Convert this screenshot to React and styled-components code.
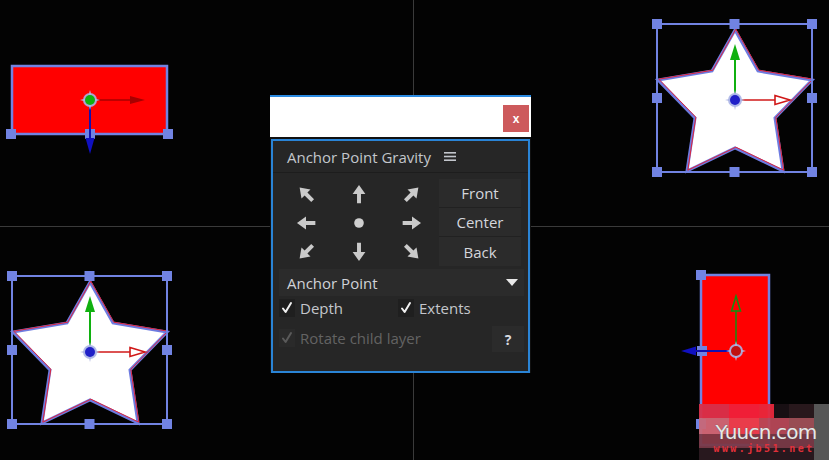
import React from "react";
import styled, { createGlobalStyle } from "styled-components";

const Global = createGlobalStyle`
  html, body { margin: 0; padding: 0; background: #000; }
  body { font-family: "Open Sans", "Noto Sans", sans-serif; }
`;

const Stage = styled.div`
  position: relative;
  width: 829px;
  height: 460px;
  overflow: hidden;
  background: #030303;
`;

const CanvasSvg = styled.svg`
  display: block;
`;

const Window = styled.div`
  position: absolute;
  left: 270px;
  top: 95px;
  width: 261px;
  display: flex;
  flex-direction: column;
  background: #111;
`;

const TitleBar = styled.div`
  height: 37px;
  background: #fff;
  border-top: 2px solid #2b8be2;
  display: flex;
  align-items: center;
  justify-content: flex-end;
  padding: 3px 2px 0 0;
  box-sizing: content-box;
`;

const CloseButton = styled.div`
  width: 26px;
  height: 27px;
  background: #cd5a5c;
  color: #fff;
  font: bold 12px "Liberation Sans", Arial, sans-serif;
  display: flex;
  align-items: center;
  justify-content: center;
`;

const Panel = styled.div`
  margin: 2px 1px 0 1px;
  height: 230px;
  border: 2px solid #2a84d6;
  background: #262626;
  display: flex;
  flex-direction: column;
  color: #c6c6c6;
`;

const Header = styled.div`
  height: 31px;
  border-bottom: 1px solid #1d1d1d;
  display: flex;
  align-items: center;
  gap: 13px;
  padding-left: 14px;
  font-size: 15px;
  color: #c3c6cc;
`;

const Body = styled.div`
  display: flex;
  flex-direction: column;
  padding: 6px 4px 0 6px;
`;

const GravityGrid = styled.div`
  display: grid;
  grid-template-columns: 53px 53px 53px 83px;
  grid-template-rows: repeat(3, 29px);
  & > :nth-child(4n) {
    margin-left: 1px;
  }
`;

const ArrowCell = styled.div`
  display: flex;
  align-items: center;
  justify-content: center;
`;

const SideButton = styled.div`
  background: #2b2b2b;
  border-bottom: ${(p) => (p.$last ? "none" : "1px solid #212121")};
  display: flex;
  align-items: center;
  justify-content: center;
  font-size: 15px;
  color: #d4d6dc;
`;

const Dropdown = styled.div`
  margin-top: 3px;
  height: 27px;
  background: #2b2b2b;
  display: flex;
  align-items: center;
  justify-content: space-between;
  padding: 0 6px 0 8px;
  font-size: 15px;
  color: #d0d2d8;
`;

const CheckRow = styled.div`
  margin-top: 1px;
  height: 22px;
  display: grid;
  grid-template-columns: 119px 1fr;
  align-items: center;
`;

const BottomRow = styled.div`
  margin-top: 7px;
  height: 26px;
  display: flex;
  align-items: center;
  justify-content: space-between;
`;

const Check = styled.label`
  display: flex;
  align-items: center;
  gap: 5px;
  font-size: 15px;
  color: ${(p) => (p.$disabled ? "#636363" : "#c4c6cc")};
  margin-top: ${(p) => (p.$disabled ? "-3px" : "0")};
`;

const Box = styled.span`
  width: 16px;
  height: 18px;
  background: ${(p) => (p.$disabled ? "#2a2a2a" : "#1f1f1f")};
  display: flex;
  align-items: center;
  justify-content: center;
`;

const HelpButton = styled.div`
  width: 32px;
  height: 26px;
  background: #2b2b2b;
  display: flex;
  align-items: center;
  justify-content: center;
  font-size: 14px;
  font-weight: bold;
  color: #d8dae0;
`;

const Watermark = styled.div`
  position: absolute;
  left: 699px;
  top: 404px;
  width: 130px;
  height: 56px;
  display: flex;
  flex-direction: column;
  align-items: center;
`;

const MarkMain = styled.div`
  margin-top: 17px;
  margin-left: 4px;
  font: 20px "DejaVu Sans", sans-serif;
  letter-spacing: -0.8px;
  color: #e8e8e8;
  line-height: 22px;
  text-shadow: 0 0 1px #555;
`;

const MarkSub = styled.div`
  font: bold 10px "DejaVu Sans Mono", monospace;
  letter-spacing: 2.4px;
  color: #e0303a;
  line-height: 12px;
`;

const Arrow = ({ angle }) => (
  <svg width="22" height="22" viewBox="0 0 20 20">
    <g transform={`rotate(${angle} 10 10)`}>
      <path d="M1.5 8.2h8.5V4.2L18.2 10 10 15.8v-4H1.5z" fill="#cacaca" />
    </g>
  </svg>
);

const Dot = () => (
  <svg width="20" height="20" viewBox="0 0 20 20">
    <circle cx="10" cy="10" r="4.8" fill="#cfcfcf" />
  </svg>
);

const Hamburger = () => (
  <svg width="12" height="11" viewBox="0 0 12 11">
    <rect x="0" y="1" width="12" height="1.6" fill="#c3c6cc" />
    <rect x="0" y="4.7" width="12" height="1.6" fill="#c3c6cc" />
    <rect x="0" y="8.4" width="12" height="1.6" fill="#c3c6cc" />
  </svg>
);

const Tick = ({ color }) => (
  <svg width="14" height="14" viewBox="0 0 14 14">
    <path d="M3 7.5l2.6 3.5L11 2" fill="none" stroke={color} strokeWidth="2" strokeLinecap="round" strokeLinejoin="round" />
  </svg>
);

const Triangle = () => (
  <svg width="12" height="8" viewBox="0 0 12 8">
    <path d="M0 0h12L6 7z" fill="#e8e8e8" />
  </svg>
);

/* ---------- canvas drawing ---------- */
const HC = "#7183e2";

const Handle = ({ x, y }) => <rect x={x - 5} y={y - 5} width="10" height="10" fill={HC} />;

const starPts = [
  [90, 282], [113, 323], [167, 332], [130, 370], [138, 423],
  [90, 400], [42, 423], [50, 370], [13, 332], [67, 323],
];
const starPath = (dx, dy) =>
  "M" + starPts.map(([x, y]) => `${x + dx},${y + dy}`).join(" L") + "Z";

const AnchorMark = ({ cx, cy, fill }) => (
  <g>
    <path
      d={`M${cx - 10},${cy} L${cx},${cy - 3} L${cx + 10},${cy} L${cx},${cy + 3}Z M${cx},${cy - 10} L${cx + 3},${cy} L${cx},${cy + 10} L${cx - 3},${cy}Z`}
      fill="#b8bfe6"
      opacity="0.85"
    />
    <circle cx={cx} cy={cy} r="7" fill="#a9b3e6" opacity="0.9" />
    <circle cx={cx} cy={cy} r="5" fill={fill} />
  </g>
);

const Star = ({ dx, dy, cx, cy }) => {
  const x0 = 12 + dx, x1 = 167 + dx, y0 = 276 + dy, y1 = 424 + dy;
  const mx = (x0 + x1) / 2, my = (y0 + y1) / 2;
  return (
    <g>
      <path d={starPath(dx, dy)} fill="#fff" stroke="#6d7be0" strokeWidth="3" strokeLinejoin="miter" />
      <path d={starPath(dx, dy)} fill="none" stroke="#e0243a" strokeWidth="1" transform="translate(0.8 -0.8)" />
      <rect x={x0} y={y0} width={x1 - x0} height={y1 - y0} fill="none" stroke={HC} strokeWidth="2" />
      {[
        [x0, y0], [mx, y0], [x1, y0], [x0, my], [x1, my], [x0, y1], [mx, y1], [x1, y1],
      ].map(([x, y], i) => (
        <Handle key={i} x={x} y={y} />
      ))}
      <line x1={cx} y1={cy} x2={cx} y2={cy - 44} stroke="#10b010" strokeWidth="2" />
      <path d={`M${cx - 5},${cy - 40} L${cx},${cy - 56} L${cx + 5},${cy - 40}Z`} fill="#10b010" />
      <line x1={cx} y1={cy} x2={cx + 40} y2={cy} stroke="#d01818" strokeWidth="1.6" />
      <path d={`M${cx + 40},${cy - 4.5} L${cx + 55},${cy} L${cx + 40},${cy + 4.5}Z`} fill="none" stroke="#d01818" strokeWidth="1.6" />
      <AnchorMark cx={cx} cy={cy} fill="#2020c8" />
    </g>
  );
};

const Canvas = () => (
  <CanvasSvg width="829" height="460" viewBox="0 0 829 460">
    <rect width="829" height="460" fill="#030303" />
    <line x1="0" y1="226.5" x2="829" y2="226.5" stroke="#3a3a3a" strokeWidth="1" />
    <line x1="413.5" y1="0" x2="413.5" y2="460" stroke="#3a3a3a" strokeWidth="1" />

    {/* top-left red rectangle */}
    <rect x="12" y="66" width="155" height="68" fill="#ff0000" stroke={HC} strokeWidth="2.5" />
    <Handle x={11} y={134} />
    <Handle x={90} y={134} />
    <Handle x={168} y={134} />
    <line x1="90" y1="100" x2="132" y2="100" stroke="#a80000" strokeWidth="1.5" />
    <path d="M130,96 L145,100 L130,104Z" fill="#a80000" />
    <line x1="90" y1="100" x2="90" y2="140" stroke="#1010b0" strokeWidth="2" />
    <path d="M85.5,138 L90,154 L94.5,138Z" fill="#1010c0" />
    <AnchorMark cx={90} cy={100} fill="#10b010" />

    {/* stars */}
    <Star dx={645} dy={-252} cx={735} cy={100} />
    <Star dx={0} dy={0} cx={90} cy={352} />

    {/* bottom-right red rectangle */}
    <rect x="701" y="275" width="68" height="170" fill="#ff0000" stroke={HC} strokeWidth="2.5" />
    <Handle x={701} y={275} />
    <Handle x={702} y={351} />
    <Handle x={701} y={424} />
    <line x1="736" y1="351" x2="736" y2="310" stroke="#109010" strokeWidth="1.5" />
    <path d="M731.5,311 L736,296 L740.5,311Z" fill="none" stroke="#109010" strokeWidth="1.5" />
    <line x1="736" y1="351" x2="694" y2="351" stroke="#1010b0" strokeWidth="2" />
    <path d="M696,346.5 L681,351 L696,355.5Z" fill="#1010c0" />
    <AnchorMark cx={736} cy={351} fill="#c01010" />

    {/* watermark mosaic */}
    <g opacity="0.95">
      <rect x="699" y="404" width="130" height="56" fill="#5a2a34" />
      <rect x="699" y="404" width="30" height="14" fill="#d8304a" />
      <rect x="729" y="404" width="30" height="14" fill="#f0203a" />
      <rect x="759" y="404" width="15" height="14" fill="#e8283c" />
      <rect x="774" y="404" width="15" height="14" fill="#1a1014" />
      <rect x="789" y="404" width="25" height="14" fill="#2a1a1e" />
      <rect x="814" y="404" width="15" height="56" fill="#5c5c5c" />
      <rect x="699" y="418" width="30" height="16" fill="#c86878" />
      <rect x="729" y="418" width="30" height="16" fill="#e84050" />
      <rect x="759" y="418" width="30" height="16" fill="#b84858" />
      <rect x="789" y="418" width="25" height="16" fill="#a05058" />
      <rect x="699" y="434" width="115" height="14" fill="#7a3a48" />
      <rect x="699" y="448" width="115" height="12" fill="#2a1a20" />
    </g>
  </CanvasSvg>
);

const arrows = [-135, -90, -45, 180, null, 0, 135, 90, 45];

export default function App() {
  return (
    <>
      <Global />
      <Stage>
        <Canvas />
        <Watermark>
          <MarkMain>Yuucn.com</MarkMain>
          <MarkSub>www.jb51.net</MarkSub>
        </Watermark>
        <Window>
          <TitleBar>
            <CloseButton>x</CloseButton>
          </TitleBar>
          <Panel>
            <Header>
              <span>Anchor Point Gravity</span>
              <Hamburger />
            </Header>
            <Body>
              <GravityGrid>
                {[0, 1, 2].map((r) => (
                  <React.Fragment key={r}>
                    {arrows.slice(r * 3, r * 3 + 3).map((a, i) => (
                      <ArrowCell key={i}>{a === null ? <Dot /> : <Arrow angle={a} />}</ArrowCell>
                    ))}
                    <SideButton $last={r === 2}>{["Front", "Center", "Back"][r]}</SideButton>
                  </React.Fragment>
                ))}
              </GravityGrid>
              <Dropdown>
                <span>Anchor Point</span>
                <Triangle />
              </Dropdown>
              <CheckRow>
                <Check>
                  <Box>
                    <Tick color="#f0f0f0" />
                  </Box>
                  Depth
                </Check>
                <Check>
                  <Box>
                    <Tick color="#f0f0f0" />
                  </Box>
                  Extents
                </Check>
              </CheckRow>
              <BottomRow>
                <Check $disabled>
                  <Box $disabled>
                    <Tick color="#5a5a5a" />
                  </Box>
                  Rotate child layer
                </Check>
                <HelpButton>?</HelpButton>
              </BottomRow>
            </Body>
          </Panel>
        </Window>
      </Stage>
    </>
  );
}
